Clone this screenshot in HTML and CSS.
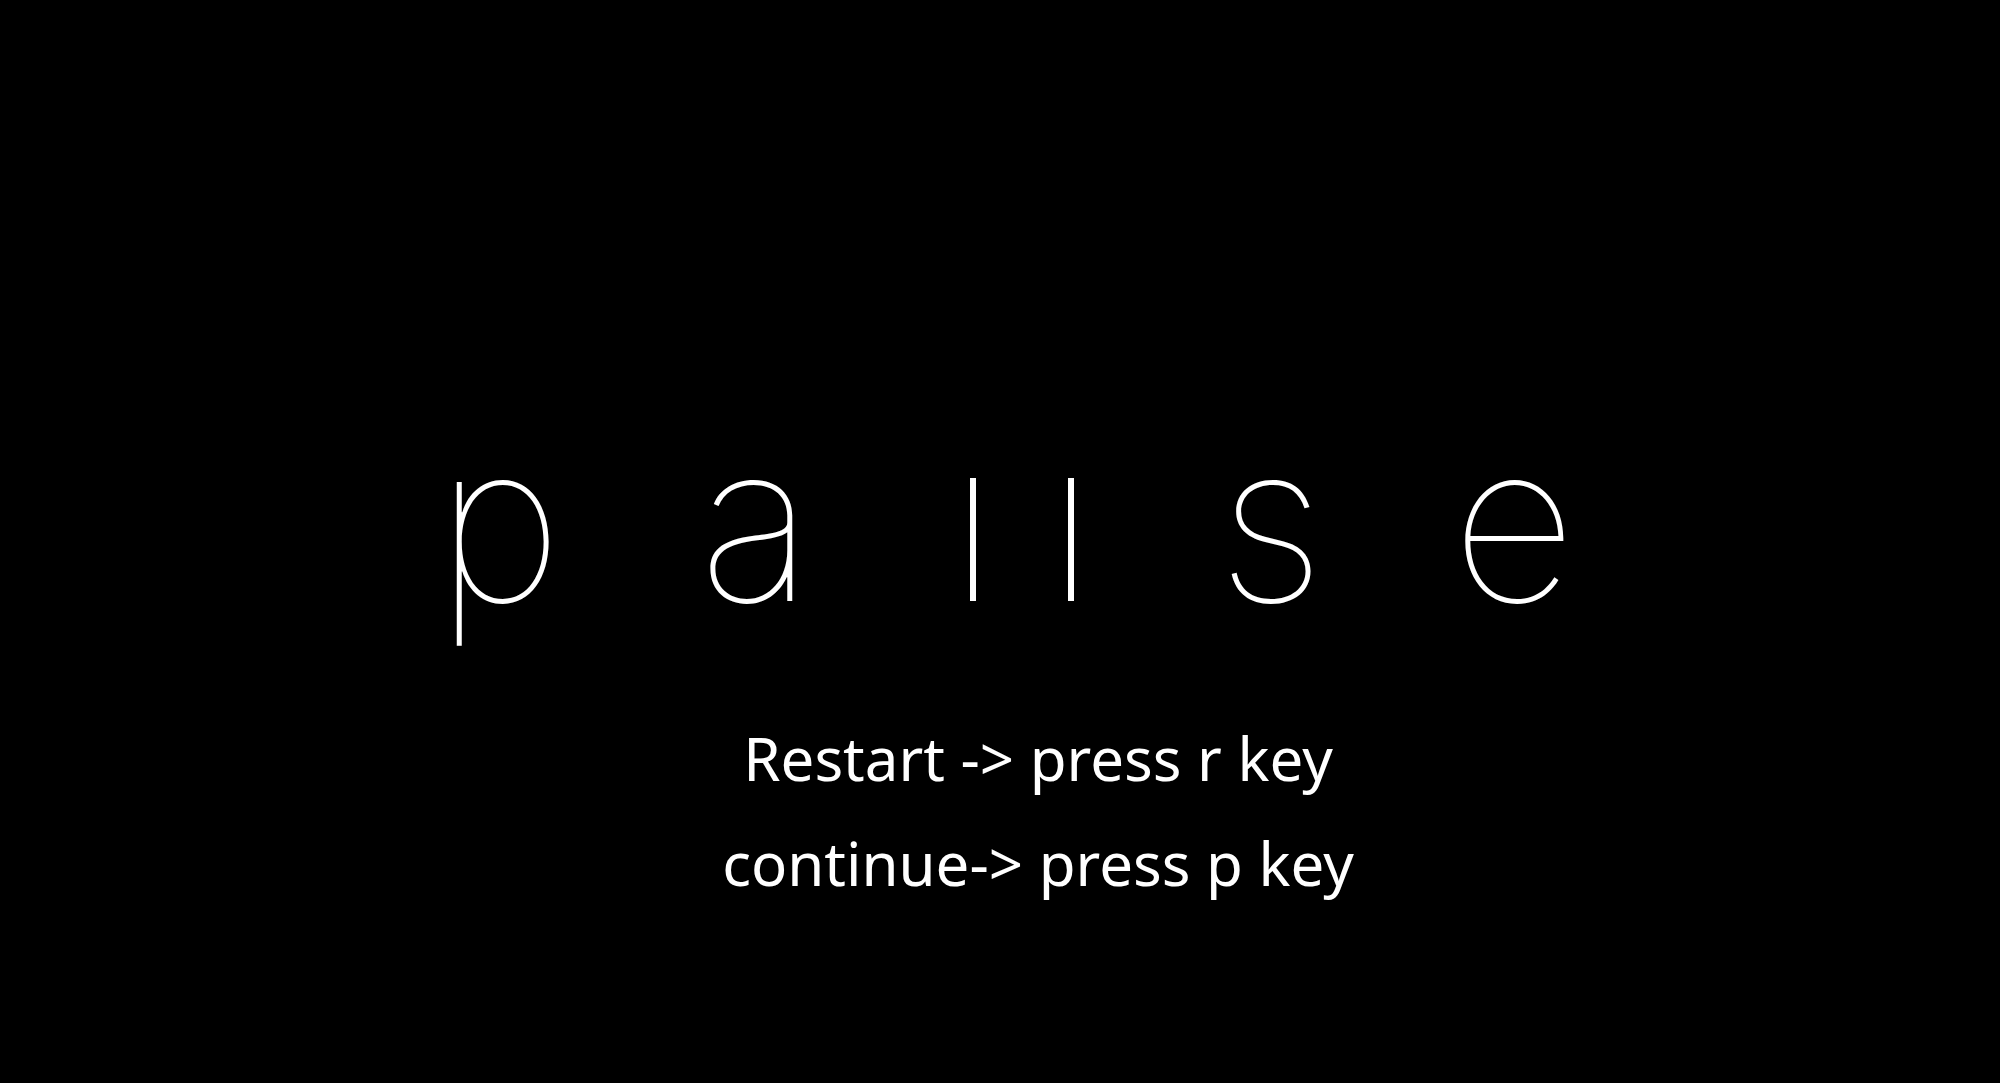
FILE: index.html
```html
<!DOCTYPE html>
<html lang="en">
<head>
<meta charset="utf-8">
<title>Pause</title>
<link rel="stylesheet" href="styles.css">
</head>
<body>
<main class="pause">
  <h1 class="title">
    <span>p</span>
    <span>a</span>
    <span class="bars" role="img" aria-label="u"></span>
    <span>s</span>
    <span>e</span>
  </h1>
  <div class="hints">
    <p>Restart -&gt; press r key</p>
    <p>continue-&gt; press p key</p>
  </div>
</main>
</body>
</html>
```
FILE: styles.css
```css
body {
  margin: 0;
  background: #000;
  color: #fff;
}

.pause {
  min-height: 100vh;
  box-sizing: border-box;
  padding-top: 392px;
}

.title {
  display: grid;
  grid-template-columns: 258fr 256fr 276fr 222fr 264fr;
  align-items: baseline;
  justify-items: center;
  max-width: 1276px;
  margin: 0 auto;
  padding-left: 16px;
  font: 100 218px/260px Inter, sans-serif;
}

/* The "u" is drawn as the two bars of a pause symbol. */
.bars {
  box-sizing: border-box;
  width: 104px;
  height: 123px;
  border: solid #fff;
  border-width: 0 6px;
}

.hints {
  margin-top: 54px;
  padding-left: 76px;
  text-align: center;
  font: 400 60px/105px "Noto Sans", sans-serif;
}

.hints p {
  margin: 0;
}
```
